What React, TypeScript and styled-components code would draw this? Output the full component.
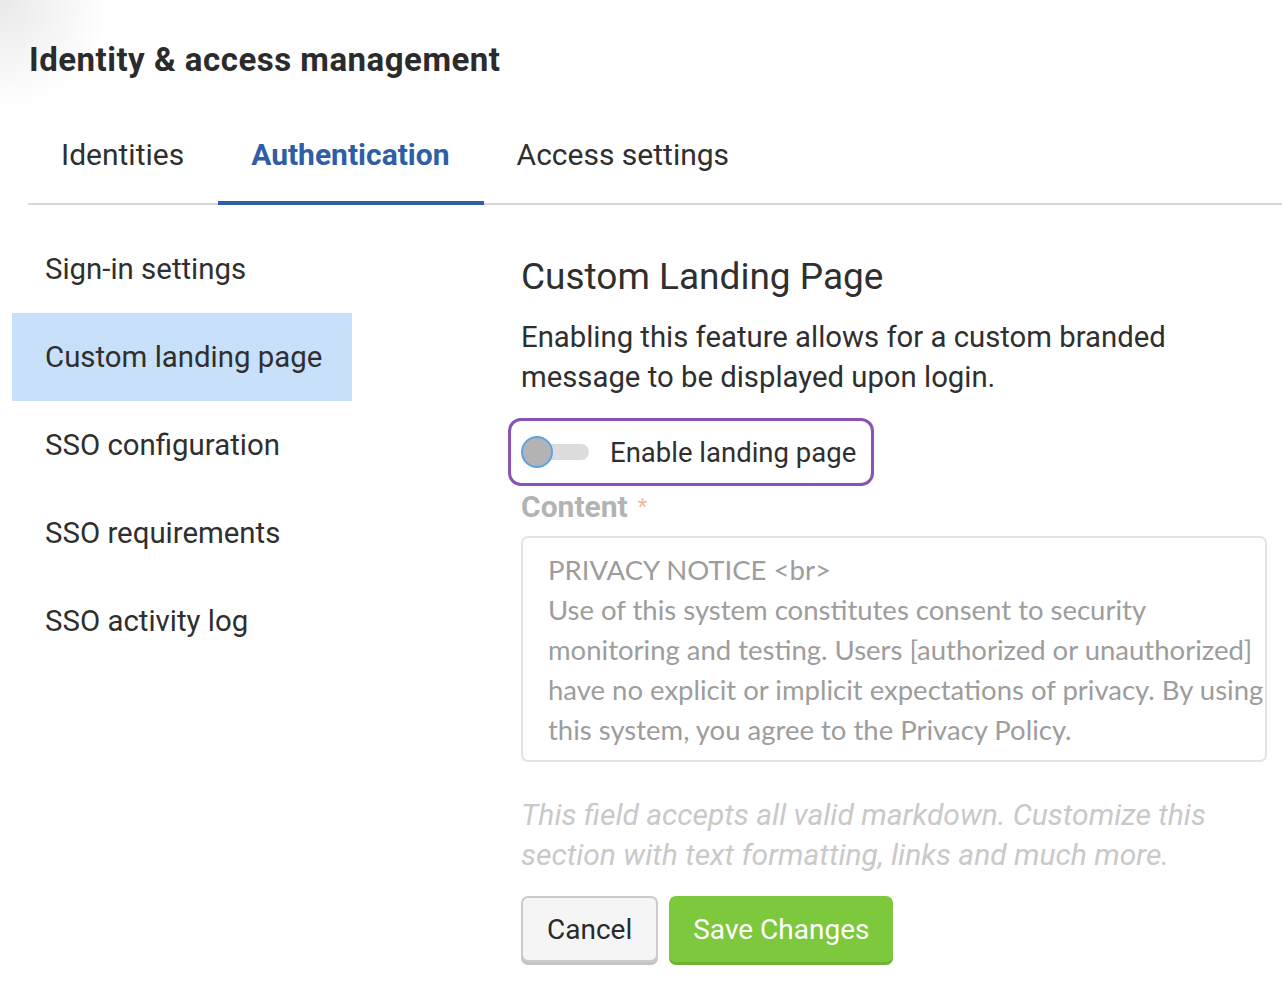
import React, { useState } from 'react';
import styled, { createGlobalStyle } from 'styled-components';

const Colors = {
  text: '#2f2f2f',
  blue: '#2e5ea6',
  line: '#d6d6d6',
  activeBg: '#c8e0fa',
  purple: '#8b52b5',
  muted: '#b3b3b3',
  faint: '#c9c9c9',
  green: '#7dc83d',
};

const Global = createGlobalStyle`
  html, body {
    margin: 0;
    padding: 0;
    background: radial-gradient(circle at 0 0, #e9e9e9 0, #ffffff 110px) no-repeat, #ffffff;
  }
  body {
    font-family: Roboto, 'Liberation Sans', sans-serif;
    color: ${Colors.text};
  }
`;

const Page = styled.div`
  width: 1282px;
  min-height: 990px;
  overflow: hidden;
`;

const Title = styled.h1`
  margin: 0;
  padding: 40px 0 0 29px;
  font-size: 33px;
  letter-spacing: 0.5px;
  line-height: 40px;
  font-weight: 700;
  color: #2b2b2b;
`;

const TabBar = styled.nav`
  display: flex;
  margin: 33px 0 0 28px;
  border-bottom: 2px solid ${Colors.line};
`;

const Tab = styled.div<{ $active?: boolean }>`
  padding: 0 34px 6px 33px;
  height: 92px;
  display: flex;
  align-items: center;
  box-sizing: border-box;
  font-size: 30px;
  font-weight: ${(p) => (p.$active ? 700 : 400)};
  color: ${(p) => (p.$active ? Colors.blue : Colors.text)};
  border-bottom: 4px solid ${(p) => (p.$active ? Colors.blue : 'transparent')};
  margin-bottom: -2px;
`;

const Body = styled.div`
  display: grid;
  grid-template-columns: 340px 1fr;
  column-gap: 169px;
  padding-left: 12px;
`;

const SideNav = styled.ul`
  list-style: none;
  margin: 20px 0 0;
  padding: 0;
`;

const SideItem = styled.li<{ $active?: boolean }>`
  height: 88px;
  display: flex;
  align-items: center;
  padding-left: 33px;
  font-size: 29.4px;
  color: ${Colors.text};
  background: ${(p) => (p.$active ? Colors.activeBg : 'transparent')};
`;

const Content = styled.section`
  padding-top: 50px;
  padding-right: 14px;
`;

const Heading = styled.h2`
  margin: 0;
  font-size: 37px;
  line-height: 44px;
  font-weight: 400;
  color: #2f2f2f;
`;

const Description = styled.p`
  margin: 18px 0 0;
  font-size: 29.3px;
  line-height: 40px;
`;

const ToggleBox = styled.label`
  display: inline-flex;
  align-items: center;
  gap: 21px;
  margin: 21px 0 0 -13px;
  padding: 0 15px 0 10px;
  height: 68px;
  box-sizing: border-box;
  border: 3px solid ${Colors.purple};
  border-radius: 13px;
  font-size: 27.5px;
  cursor: pointer;
`;

const Switch = styled.span<{ $on: boolean }>`
  position: relative;
  width: 68px;
  height: 32px;
  display: inline-block;
  &::before {
    content: '';
    position: absolute;
    left: 16px;
    right: 0;
    top: 8px;
    height: 16px;
    border-radius: 8px;
    background: ${(p) => (p.$on ? '#a8d08a' : '#dcdcdc')};
  }
  &::after {
    content: '';
    position: absolute;
    top: 0;
    left: ${(p) => (p.$on ? '36px' : '0')};
    width: 28px;
    height: 28px;
    border-radius: 50%;
    background: ${(p) => (p.$on ? Colors.green : '#b3b3b3')};
    border: 2px solid #5aa3e6;
  }
`;

const FieldLabel = styled.div`
  margin-top: 4px;
  font-size: 30px;
  line-height: 34px;
  font-weight: 700;
  color: ${Colors.muted};
  span {
    color: #f2b899;
    font-weight: 400;
    font-size: 22px;
    vertical-align: top;
    margin-left: 10px;
  }
`;

const Editor = styled.div`
  margin-top: 12px;
  width: 746px;
  box-sizing: border-box;
  padding: 12px 0 10px 25px;
  border: 2px solid #e3e3e3;
  border-radius: 7px;
  font-family: Lato, 'Liberation Sans', sans-serif;
  font-size: 27.5px;
  line-height: 40px;
  color: #9d9d9d;
  white-space: nowrap;
  overflow: hidden;
`;

const Help = styled.p`
  margin: 33px 0 0;
  font-size: 30px;
  line-height: 40px;
  font-style: italic;
  color: ${Colors.faint};
`;

const Actions = styled.div`
  display: flex;
  gap: 11px;
  margin-top: 21px;
`;

const Button = styled.button<{ $primary?: boolean }>`
  height: 66px;
  padding: 0 ${(p) => (p.$primary ? 22 : 24)}px;
  font-family: Roboto, 'Liberation Sans', sans-serif;
  font-size: 28px;
  border-radius: 7px;
  cursor: pointer;
  color: ${(p) => (p.$primary ? '#ffffff' : '#2a2a2a')};
  background: ${(p) => (p.$primary ? Colors.green : '#f5f5f5')};
  border: 2px solid ${(p) => (p.$primary ? Colors.green : '#cbcbcb')};
  box-shadow: 0 3px 0 ${(p) => (p.$primary ? '#6cb233' : '#c4c4c4')};
`;

const tabs = ['Identities', 'Authentication', 'Access settings'];
const sideItems = ['Sign-in settings', 'Custom landing page', 'SSO configuration', 'SSO requirements', 'SSO activity log'];
const notice = [
  'PRIVACY NOTICE <br>',
  'Use of this system constitutes consent to security',
  'monitoring and testing. Users [authorized or unauthorized]',
  'have no explicit or implicit expectations of privacy. By using',
  'this system, you agree to the Privacy Policy.',
];

export default function App() {
  const [enabled, setEnabled] = useState(false);
  return (
    <Page>
      <Global />
      <Title>Identity &amp; access management</Title>
      <TabBar>
        {tabs.map((t) => (
          <Tab key={t} $active={t === 'Authentication'}>
            {t}
          </Tab>
        ))}
      </TabBar>
      <Body>
        <SideNav>
          {sideItems.map((s) => (
            <SideItem key={s} $active={s === 'Custom landing page'}>
              {s}
            </SideItem>
          ))}
        </SideNav>
        <Content>
          <Heading>Custom Landing Page</Heading>
          <Description>
            Enabling this feature allows for a custom branded
            <br />
            message to be displayed upon login.
          </Description>
          <ToggleBox onClick={() => setEnabled(!enabled)}>
            <Switch $on={enabled} />
            Enable landing page
          </ToggleBox>
          <FieldLabel>
            Content<span>*</span>
          </FieldLabel>
          <Editor>
            {notice.map((line) => (
              <div key={line}>{line}</div>
            ))}
          </Editor>
          <Help>
            This field accepts all valid markdown. Customize this
            <br />
            section with text formatting, links and much more.
          </Help>
          <Actions>
            <Button>Cancel</Button>
            <Button $primary>Save Changes</Button>
          </Actions>
        </Content>
      </Body>
    </Page>
  );
}
